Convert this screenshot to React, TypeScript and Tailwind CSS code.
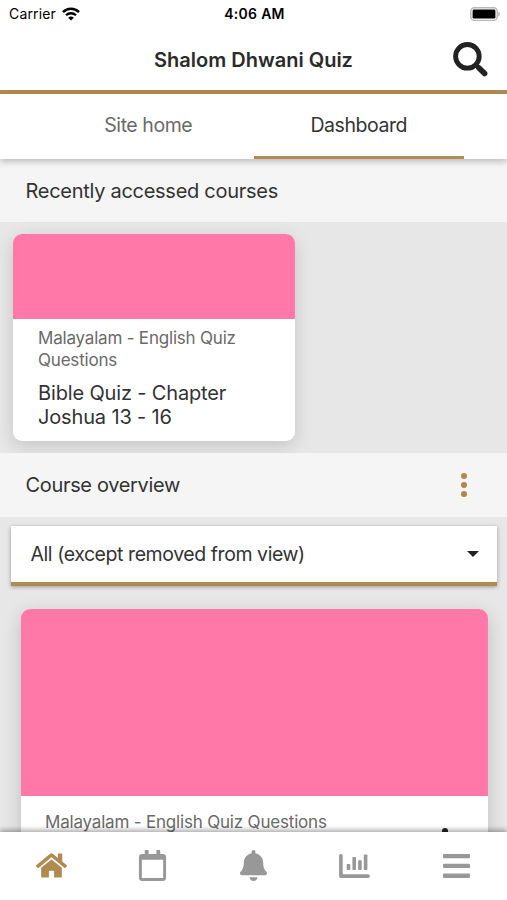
import { useState } from 'react';
import { FaBell, FaHome, FaRegCalendar } from 'react-icons/fa';

function ChartIcon({ className }: { className?: string }) {
  return (
    <svg viewBox="0 0 31 24" className={className} fill="currentColor">
      <path d="M1.7 0h.4a1.6 1.6 0 0 1 1.6 1.6v18.6h25.5a1.6 1.6 0 0 1 1.6 1.6v.5a1.6 1.6 0 0 1-1.6 1.6H1.7A1.6 1.6 0 0 1 .1 22.3V1.6A1.6 1.6 0 0 1 1.7 0Z" />
      <rect x="7.7" y="10" width="3.6" height="6.1" rx="0.8" />
      <rect x="13.4" y="3" width="3.6" height="13.1" rx="0.8" />
      <rect x="19.1" y="6.2" width="3.6" height="9.9" rx="0.8" />
      <rect x="24.8" y="0.4" width="3.6" height="15.7" rx="0.8" />
    </svg>
  );
}

function MenuIcon({ className }: { className?: string }) {
  return (
    <svg viewBox="0 0 27 24" className={className} fill="currentColor">
      <rect width="27" height="4.3" rx="1" />
      <rect y="9.8" width="27" height="4.3" rx="1" />
      <rect y="19.6" width="27" height="4.3" rx="1" />
    </svg>
  );
}

const navItems = [
  { id: 'home', label: 'Home', Icon: FaHome, size: 'ml-[2px] h-[31px] w-[31px]' },
  { id: 'calendar', label: 'Calendar', Icon: FaRegCalendar, size: 'ml-px h-[31px] w-[31px]' },
  { id: 'notifications', label: 'Notifications', Icon: FaBell, size: 'h-[31px] w-[31px]' },
  { id: 'grades', label: 'Grades', Icon: ChartIcon, size: 'h-6 w-[31px]' },
  { id: 'more', label: 'More', Icon: MenuIcon, size: 'h-6 w-[27px]' },
];

function StatusBar() {
  return (
    <div className="grid h-7 shrink-0 grid-cols-3 items-center pb-px pl-[9px] pr-[7px] text-black">
      <div className="flex items-center gap-1.5">
        <span className="text-[14px] tracking-[0.15px]">Carrier</span>
        <svg viewBox="0 0 18 14" className="h-[14px] w-[18px]" fill="none" stroke="currentColor">
          <path d="M1 5.1a11.3 11.3 0 0 1 16 0" strokeWidth="2.5" />
          <path d="M4 8.3a7.1 7.1 0 0 1 10 0" strokeWidth="2.3" />
          <path d="M9 13.6 6.2 10.8a4 4 0 0 1 5.6 0z" fill="currentColor" stroke="none" />
        </svg>
      </div>
      <span className="text-center text-[14px] font-semibold tracking-[0.3px]">4:06 AM</span>
      <svg viewBox="0 0 30 14" className="h-[14px] w-[30px] justify-self-end">
        <rect x="0.8" y="0.8" width="26.4" height="12.6" rx="3.6" fill="#fff" stroke="#b8b8b8" strokeWidth="1.4" />
        <rect x="2.6" y="2.6" width="22.8" height="9" rx="1.4" />
        <path d="M28.3 4.8c2 .8 2 3.8 0 4.6z" fill="#a8a8a8" />
      </svg>
    </div>
  );
}

function Header() {
  return (
    <header className="grid h-[66px] shrink-0 grid-cols-[1fr_auto_1fr] items-center border-b-4 border-[#b18a50] px-[18px]">
      <h1 className="col-start-2 whitespace-nowrap pt-px text-[20px] font-semibold text-[#2b2b2b]">
        Shalom Dhwani Quiz
      </h1>
      <button type="button" aria-label="Search" className="justify-self-end">
        <svg viewBox="0 0 36 36" className="h-9 w-9" fill="none" stroke="#222">
          <circle cx="14.4" cy="15.3" r="11.8" strokeWidth="4.9" />
          <path d="m22 23 4 4" strokeWidth="4" />
          <path d="m26 27 5.6 5.6" strokeWidth="5.6" strokeLinecap="round" />
        </svg>
      </button>
    </header>
  );
}

export default function App() {
  const [activeTab, setActiveTab] = useState('Dashboard');
  const [activeNav, setActiveNav] = useState('home');

  return (
    <div className="flex h-[900px] w-[507px] flex-col overflow-hidden bg-white font-['Inter',sans-serif] text-[#333]">
      <StatusBar />
      <Header />

      <div className="z-10 grid h-[64.5px] shrink-0 grid-cols-2 bg-white px-[43px] shadow-[0_3px_6px_rgba(0,0,0,0.22)]">
        {['Site home', 'Dashboard'].map((tab) => (
          <button
            key={tab}
            type="button"
            onClick={() => setActiveTab(tab)}
            className={`border-b-[3px] pt-0.5 text-[19.5px] tracking-[-0.45px] ${
              activeTab === tab ? 'border-[#b18a50] text-[#333]' : 'border-transparent text-[#696969]'
            }`}
          >
            {tab}
          </button>
        ))}
      </div>

      <main className="flex min-h-0 flex-1 flex-col overflow-hidden bg-[#e7e7e7]">
        <h2 className="flex h-[63.5px] shrink-0 items-center bg-[#f5f5f5] pl-[25.5px] pt-px text-[20px] tracking-[-0.28px]">
          Recently accessed courses
        </h2>
        <div className="h-[231px] shrink-0 overflow-hidden pl-[13px] pt-3">
          <article className="h-[207px] w-[281.5px] overflow-hidden rounded-[9px] bg-white shadow-[0_5px_18px_rgba(0,0,0,0.15)]">
            <div className="h-[84.5px] bg-[#ff78a7]" />
            <div className="px-[25px] pt-[8px]">
              <p className="text-[17px] leading-[22px] tracking-[-0.2px] text-[#6a6a6a]">
                Malayalam - English Quiz<br />Questions
              </p>
              <h3 className="mt-[10px] text-[20px] leading-[24.5px] tracking-[-0.15px]">
                Bible Quiz - Chapter<br />Joshua 13 - 16
              </h3>
            </div>
          </article>
        </div>

        <div className="flex h-16 shrink-0 items-center justify-between bg-[#f5f5f5] pl-[25.5px] pr-10">
          <h2 className="text-[20px] tracking-[-0.33px]">Course overview</h2>
          <button type="button" aria-label="Options" className="flex flex-col gap-[3px]">
            <span className="h-1.5 w-1.5 rounded-full bg-[#b1854b]" />
            <span className="h-1.5 w-1.5 rounded-full bg-[#b1854b]" />
            <span className="h-1.5 w-1.5 rounded-full bg-[#b1854b]" />
          </button>
        </div>

        <div className="pl-[11px] pr-2.5 pt-[9px]">
          <button
            type="button"
            className="flex h-[60px] w-full items-center justify-between border-b-4 border-[#b18a50] bg-white pl-[19.5px] pr-[18px] shadow-[0_1px_4px_rgba(0,0,0,0.35)]"
          >
            <span className="pt-0.5 text-[19.5px] tracking-[-0.43px]">All (except removed from view)</span>
            <span className="border-x-[6px] border-t-[6px] border-x-transparent border-t-[#222]" />
          </button>
        </div>

        <div className="pl-[20.5px] pr-[19.5px] pt-[23px]">
          <article className="h-[280px] overflow-hidden rounded-[9px] bg-white shadow-[0_5px_18px_rgba(0,0,0,0.18)]">
            <div className="h-[187px] bg-[#ff78a7]" />
            <div className="flex items-start justify-between pl-[24.5px] pr-10 pt-[15px]">
              <p className="text-[17px] leading-[22px] tracking-[-0.19px] text-[#6a6a6a]">
                Malayalam - English Quiz Questions
              </p>
              <span className="mt-[17px] h-1.5 w-1.5 rounded-full bg-[#222]" />
            </div>
          </article>
        </div>
      </main>

      <nav className="z-10 grid h-[68.5px] shrink-0 grid-cols-5 bg-white shadow-[0_-2px_5px_rgba(0,0,0,0.35)]">
        {navItems.map(({ id, label, Icon, size }) => (
          <button
            key={id}
            type="button"
            aria-label={label}
            onClick={() => setActiveNav(id)}
            className={`flex items-center justify-center ${activeNav === id ? 'text-[#b18a50]' : 'text-[#989898]'}`}
          >
            <Icon className={size} />
          </button>
        ))}
      </nav>
    </div>
  );
}
